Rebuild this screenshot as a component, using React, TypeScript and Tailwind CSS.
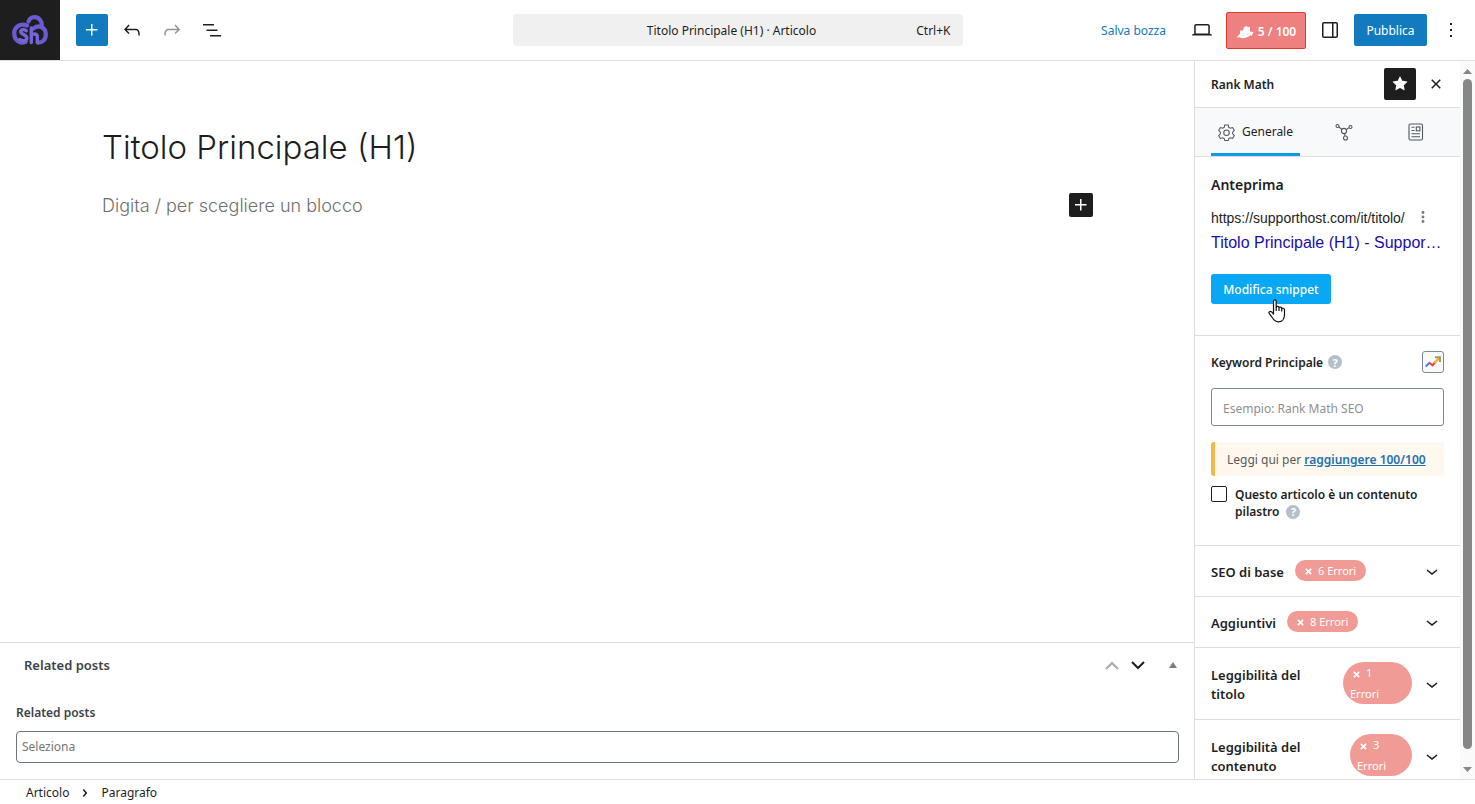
import React from "react";

const PATHS = {
  plus: "M11 12.5V17.5H12.5V12.5H17.5V11H12.5V6H11V11H6V12.5H11Z",
  undo: "M18.3 11.7c-.6-.6-1.4-.9-2.3-.9H6.7l2.9-3.3-1.1-1-4.5 5L8.5 16l1-1-2.7-2.7H16c.5 0 .9.2 1.3.5 1 1 1 3.4 1 4.5v.3h1.5v-.2c0-1.5 0-4.3-1.5-5.7z",
  redo: "M15.6 6.5l-1.1 1 2.9 3.3H8c-.9 0-1.7.3-2.3.9-1.4 1.5-1.4 4.2-1.4 5.6v.2h1.5v-.3c0-1.1 0-3.5 1-4.5.3-.3.7-.5 1.3-.5h9.2L14.5 15l1.1 1.1 4.6-4.6-4.6-5z",
  list: "M3 6h11v1.5H3V6Zm3.5 5.5h11V13h-11v-1.5ZM21 17H10v1.5h11V17Z",
  desktop: "M20.5 16h-.7V8c0-1.1-.9-2-2-2H6.2c-1.1 0-2 .9-2 2v8h-.7c-.8 0-1.5.7-1.5 1.5h20c0-.8-.7-1.5-1.5-1.5zM5.7 8c0-.3.2-.5.5-.5h11.6c.3 0 .5.2.5.5v7.6H5.7V8z",
  drawer: "M18 4H6c-1.1 0-2 .9-2 2v12c0 1.1.9 2 2 2h12c1.1 0 2-.9 2-2V6c0-1.1-.9-2-2-2zm-4 14.5H6c-.3 0-.5-.2-.5-.5V6c0-.3.2-.5.5-.5h8v13zm4.5-.5c0 .3-.2.5-.5.5h-2.5v-13H18c.3 0 .5.2.5.5v12z",
  more: "M13 19h-2v-2h2v2zm0-6h-2v-2h2v2zm0-6h-2V5h2v2z",
  down: "M17.5 11.6L12 16l-5.5-4.4.9-1.2L12 14l4.5-3.6 1 1.2z",
  star: "M11.776 4.454a.25.25 0 01.448 0l2.069 4.192a.25.25 0 00.188.137l4.626.672a.25.25 0 01.139.426l-3.348 3.263a.25.25 0 00-.072.222l.79 4.607a.25.25 0 01-.362.263l-4.138-2.175a.25.25 0 00-.232 0l-4.138 2.175a.25.25 0 01-.363-.263l.79-4.607a.25.25 0 00-.071-.222L4.754 9.881a.25.25 0 01.139-.426l4.626-.672a.25.25 0 00.188-.137l2.069-4.192z",
  close: "M12 13.06l3.712 3.713 1.061-1.06L13.061 12l3.712-3.712-1.06-1.06L12 10.938 8.288 7.227l-1.061 1.06L10.939 12l-3.712 3.712 1.06 1.061L12 13.061z",
  right: "M10.86 8.04L14.28 12.03L10.86 16.02L9.72 15.04L12.3 12.03L9.72 9.02L10.86 8.04Z",
};

function Icon({ name, className = "size-6" }: { name: keyof typeof PATHS; className?: string }) {
  return (
    <svg viewBox="0 0 24 24" fill="currentColor" className={`shrink-0 ${className}`} aria-hidden="true">
      <path d={PATHS[name]} />
    </svg>
  );
}

function Logo() {
  return (
    <svg viewBox="0 0 36 30" className="h-[30px] w-9" fill="none" strokeLinecap="round" aria-hidden="true">
      <g stroke="#6a5cd0" strokeWidth="4.2">
        <path d="M13.500 26.800C8 29.500 2.200 25 2.200 18.500C2.200 12 8 8 15 10.500" />
        <path d="M16.500 6.500C18 1.500 24.500 .8 28 4.800C29.200 6.300 29.800 8 29.800 10" />
        <path d="M21.500 13.500C26 9 33.800 12 33.800 19.500C33.800 25 30 27.800 25.800 27.600" />
      </g>
      <g stroke="#7466d8" strokeWidth="3.400">
        <path d="M14.300 15.800C11.500 13.400 8.200 15 9 17.500C10 20 14.800 19.500 14.800 23C14.800 26.300 9.800 26.300 7.800 24.500" />
        <path d="M19.300 13V27.500M19.300 21C21 18 25.300 18.300 25.300 22V27.500" />
      </g>
    </svg>
  );
}

function RankIcon() {
  return (
    <svg viewBox="0 0 18 16" className="h-4 w-[18px]" fill="#fff" aria-hidden="true">
      <path d="M4 6.500h3.500V11L4 12.300zM7.500 3.500l3-1.500h.5v8.500l-3.500 1.500zM11 3h3v5.500l-3 1.800z" />
      <path d="M.5 13.500l3.200-3.600 1.500 1.500c3.200.2 6.500-1 8.700-3l-.9-1.200 4.600 1-2 4-.9-1.200c-2.900 2.500-6.200 3.400-9.700 3.100l-1.300-.8z" />
    </svg>
  );
}

function Help() {
  return (
    <span className="inline-flex size-[14px] shrink-0 items-center justify-center rounded-full bg-[#b5bfc9] text-[11px] leading-none font-bold text-white">
      ?
    </span>
  );
}

function Badge({ count, stacked }: { count: number; stacked?: string }) {
  return (
    <span
      className={`rounded-[21px] bg-[#f09b96] text-[11px] text-white ${
        stacked ? `${stacked} pl-[7px] leading-[21px]` : "mb-[2px] px-[10px] leading-[21px] whitespace-nowrap"
      }`}
    >
      <svg viewBox="0 0 8 8" className={`mr-[6px] inline size-[7px] ${stacked ? "ml-[3px]" : ""}`} stroke="#fff" strokeWidth="2" aria-hidden="true">
        <path d="M1 1l6 6M7 1l-6 6" />
      </svg>
      {count} {stacked && <br />}Errori
    </span>
  );
}

const panels = [
  { title: "SEO di base", count: 6 },
  { title: "Aggiuntivi", count: 8 },
  { title: "Leggibilità del titolo", count: 1, stacked: "w-[69px]" },
  { title: "Leggibilità del contenuto", count: 3, stacked: "w-[62px]" },
];

function Header() {
  return (
    <header className="flex h-[61px] shrink-0 items-center border-b border-[#ddd]">
      <div className="flex flex-1 items-center gap-2">
        <a href="#" aria-label="SupportHost" className="mr-2 flex h-[60px] w-[60px] items-center justify-center bg-[#1e1e1e]">
          <Logo />
        </a>
        <button aria-label="Inserisci blocco" className="flex size-8 items-center justify-center rounded-xs bg-[#127bbf] text-white">
          <Icon name="plus" />
        </button>
        <button aria-label="Annulla" className="flex size-8 items-center justify-center"><Icon name="undo" /></button>
        <button aria-label="Ripeti" className="flex size-8 items-center justify-center text-[#949494]"><Icon name="redo" /></button>
        <button aria-label="Panoramica" className="flex size-8 items-center justify-center"><Icon name="list" /></button>
      </div>
      <button className="grid h-8 w-[450px] grid-cols-[1fr_auto_1fr] items-center rounded-sm bg-[#f0f0f0] px-3 pt-[2px]">
        <span className="col-start-2 pr-3">Titolo Principale (H1) · Articolo</span>
        <span className="text-right">Ctrl+K</span>
      </button>
      <div className="flex flex-1 items-center justify-end">
        <button className="mr-6 pt-[2px] text-[#127bbf]">Salva bozza</button>
        <button aria-label="Anteprima" className="mr-3"><Icon name="desktop" /></button>
        <button className="flex h-[37px] w-20 items-center justify-center gap-1 rounded-xs border border-[#e2392f] bg-[#ee807f] pt-[3px] font-semibold text-white">
          <RankIcon />
          <span>5 / 100</span>
        </button>
        <button aria-label="Impostazioni" className="mx-3"><Icon name="drawer" /></button>
        <button className="h-8 w-[73px] rounded-xs bg-[#127bbf] pt-[2px] text-white">Pubblica</button>
        <button aria-label="Opzioni" className="mx-3"><Icon name="more" /></button>
      </div>
    </header>
  );
}

function Editor() {
  return (
    <main className="flex min-w-0 flex-1 flex-col">
      <div className="flex-1 pt-[63px] pr-[101px] pl-[102px]">
        <h1 className="font-['Inter',sans-serif] text-[33px] leading-[46px] font-light text-[#1e1e1e]">Titolo Principale (H1)</h1>
        <div className="mt-[22px] flex items-center justify-between">
          <p className="pt-[2px] font-['Inter',sans-serif] text-[18px] leading-6 font-light text-[#6f6f6f]">Digita / per scegliere un blocco</p>
          <button aria-label="Aggiungi blocco" className="flex size-6 items-center justify-center rounded-xs bg-[#1e1e1e] text-white">
            <Icon name="plus" />
          </button>
        </div>
      </div>
      <section className="h-[137px] border-t border-[#ddd] pr-[15px] pl-4 text-[#3c434a]">
        <div className="flex h-11 items-center pl-2">
          <h2 className="flex-1 text-[13px] font-semibold">Related posts</h2>
          <button aria-label="Sposta su" className="mr-3 text-[#a7aaad]">
            <svg viewBox="0 0 14 9" className="h-[9px] w-[14px]" fill="none" stroke="currentColor" strokeWidth="2"><path d="M1 8l6-6 6 6" /></svg>
          </button>
          <button aria-label="Sposta giù" className="mr-6 text-[#1e1e1e]">
            <svg viewBox="0 0 14 9" className="h-[9px] w-[14px]" fill="none" stroke="currentColor" strokeWidth="2"><path d="M1 1l6 6 6-6" /></svg>
          </button>
          <button aria-label="Comprimi" className="mr-[2px] text-[#787c82]">
            <svg viewBox="0 0 8 6" className="h-[6px] w-2" fill="currentColor"><path d="M4 0l4 6H0z" /></svg>
          </button>
        </div>
        <label htmlFor="related" className="mt-[17px] block text-[12px] leading-[18px] font-semibold">Related posts</label>
        <input id="related" placeholder="Seleziona" className="mt-[9px] block h-8 w-full rounded-sm border border-[#6b7480] px-[5px] pb-[2px] placeholder:text-[#757575]" />
      </section>
    </main>
  );
}

function Sidebar() {
  return (
    <aside className="flex w-[281px] shrink-0 border-l border-[#ddd]">
      <div className="min-w-0 flex-1 overflow-hidden">
        <div className="flex h-[47px] items-center border-b border-[#ddd] pr-3 pl-4">
          <h2 className="flex-1 pt-[2px] font-semibold">Rank Math</h2>
          <button aria-label="Fissa" className="flex size-8 items-center justify-center rounded-xs bg-[#1e1e1e] text-white"><Icon name="star" /></button>
          <button aria-label="Chiudi" className="ml-2"><Icon name="close" /></button>
        </div>
        <nav className="flex h-[49px] border-b border-[#ddd] bg-[#f8f9fb] pr-2 pl-4">
          <button className="flex w-[89px] items-center justify-center gap-[7px] border-b-3 border-[#0c9ce2] pt-[3px]">
            <svg viewBox="0 0 18 18" className="size-[17px]" fill="none" stroke="#50575e" strokeWidth="1.1" aria-hidden="true">
              <path d="M7.200 1h3.600l.6 2.500 1.600.9 2.500-.7 1.800 3.100-1.800 1.800v1.800l1.800 1.800-1.800 3.100-2.500-.7-1.600.9-.6 2.000H7.200l-.6-2-1.600-.9-2.500.7L.7 12.200l1.800-1.800V8.600L.7 6.800l1.800-3.100 2.500.7 1.600-.9z" />
              <circle cx="9" cy="9.300" r="2.900" />
            </svg>
            Generale
          </button>
          <button aria-label="Schema" className="flex flex-1 items-center justify-center pl-2">
            <svg viewBox="0 0 18 18" className="size-[18px]" fill="none" stroke="#50575e" strokeWidth="1.100" aria-hidden="true">
              <circle cx="9" cy="8" r="2.600" /><circle cx="2.500" cy="3" r="1.500" /><circle cx="15.500" cy="4" r="1.500" /><circle cx="10.500" cy="15" r="2" />
              <path d="M3.800 4l3.100 2.400M14 4.600l-2.700 2M9.500 10.600l.5 2.400" />
            </svg>
          </button>
          <button aria-label="Social" className="flex flex-1 items-center justify-center">
            <svg viewBox="0 0 16 18" className="h-[18px] w-4" fill="none" stroke="#50575e" strokeWidth="1.100" aria-hidden="true">
              <rect x="1" y="1" width="13.500" height="16" rx="1.500" />
              <rect x="8.300" y="4" width="3.600" height="3.800" />
              <path d="M3.500 4.300h3M3.500 7.500h3M3.500 10.700h8.500M3.500 13.800h8.500" />
            </svg>
          </button>
        </nav>

        <section className="relative h-[179px] border-b border-[#ddd] px-4 pt-[18px]">
          <h3 className="text-[14px] leading-5 font-semibold">Anteprima</h3>
          <div className="mt-3 flex items-center justify-between pr-[19px] font-['Liberation_Sans',sans-serif] text-[14px] leading-[22px]">
            <span>https://supporthost.com/it/titolo/</span>
            <svg viewBox="0 0 4 12" className="mb-[2px] h-3 w-1" fill="#777" aria-hidden="true"><circle cx="2" cy="1.500" r="1.400" /><circle cx="2" cy="6" r="1.400" /><circle cx="2" cy="10.500" r="1.400" /></svg>
          </div>
          <p className="mt-[2px] font-['Liberation_Sans',sans-serif] text-[16px] leading-6 whitespace-nowrap text-[#1a0dab]">Titolo Principale (H1) - Suppor…</p>
          <button className="mt-[19px] h-[30px] w-[120px] rounded-[3px] bg-[#09a8f4] pt-[2px] font-medium text-white">Modifica snippet</button>
          <svg viewBox="0 0 18 24" className="absolute top-[142px] left-[73px] h-6 w-[18px]" fill="#fff" stroke="#111" strokeWidth="1.200" strokeLinejoin="round" aria-hidden="true">
            <path d="M5.500 15V2.300C5.500.5 8.200.5 8.200 2.300V8.300C8.400 6.900 11 7 11 8.700C11.300 7.700 13.700 7.900 13.700 9.600C14.100 8.900 16.500 9 16.500 10.900V15.500C16.500 20 14 22.800 10.500 22.800C7.500 22.800 6 21.500 4.600 19L1.200 14.400C.3 13 2.200 11.600 3.600 12.900z" />
            <path d="M8.200 8.300V12M11 8.700V12M13.700 9.600V12.500" fill="none" />
          </svg>
        </section>

        <section className="h-[210px] border-b border-[#ddd] px-4 pt-[15px]">
          <div className="flex items-center">
            <label htmlFor="keyword" className="pt-[2px] font-semibold">Keyword Principale</label>
            <span className="ml-[5px] flex flex-1"><Help /></span>
            <button aria-label="Tendenze" className="flex size-[22px] items-center justify-center rounded-[3px] border border-[#7e8993] bg-[#f8f9fa]">
              <svg viewBox="0 0 16 12" className="h-3 w-4" fill="none" strokeWidth="2" aria-hidden="true">
                <path d="M.7 10.500L4.500 6.800" stroke="#4285f4" />
                <path d="M4 6.500L7.500 9.300L10.300 6" stroke="#ea4335" />
                <path d="M9.500 6.800L14 2.200" stroke="#fbaf2c" strokeWidth="2.400" />
                <path d="M10 1.300H15V6" stroke="#a39a5c" />
              </svg>
            </button>
          </div>
          <input id="keyword" placeholder="Esempio: Rank Math SEO" className="mt-[15px] block h-[38px] w-full rounded-[3px] border border-[#7e8993] px-[11px] pt-[2px] placeholder:text-[#8f8f8f]" />
          <p className="mt-4 h-[34px] rounded-[3px] border-l-4 border-[#f0b849] bg-[#fef8ee] pt-px pl-3 leading-[34px] whitespace-nowrap text-[#5a5a5a]">
            Leggi qui per <a href="#" className="font-semibold text-[#2271b1] underline">raggiungere 100/100</a>
          </p>
          <div className="mt-[10px] flex gap-2 font-semibold">
            <input id="pillar" type="checkbox" className="size-4 shrink-0 appearance-none rounded-xs border border-[#1e1e1e]" />
            <label htmlFor="pillar" className="leading-[17px]">
              Questo articolo è un contenuto <span className="inline-flex items-center gap-[7px]">pilastro <Help /></span>
            </label>
          </div>
        </section>

        {panels.map((p) => (
          <button
            key={p.title}
            className={`flex w-full items-center border-b border-[#ddd] pr-4 pl-4 text-left font-semibold ${p.stacked ? "h-[72px]" : "h-[51px]"}`}
          >
            <span className={`pt-[2px] text-[13px] leading-[19px] ${p.stacked ? "w-28" : "mr-[11px]"}`}>{p.title}</span>
            <span className={`flex font-normal ${p.stacked ? "mb-px flex-1 justify-end" : "flex-1"}`}>
              <Badge count={p.count} stacked={p.stacked} />
            </span>
            <Icon name="down" className="ml-2 size-6" />
          </button>
        ))}
      </div>
      <div className="flex w-[15px] flex-col items-center bg-[#fafafa] pt-2 pb-[7px]" aria-hidden="true">
        <svg viewBox="0 0 9 5" className="h-[5px] w-[9px]" fill="#868686"><path d="M4.500 0L9 5H0z" /></svg>
        <div className="mt-[5px] mb-[18px] w-[9px] flex-1 rounded-full bg-[#868888]" />
        <svg viewBox="0 0 9 5" className="h-[5px] w-[9px]" fill="#868686"><path d="M4.500 5L9 0H0z" /></svg>
      </div>
    </aside>
  );
}

export default function App() {
  return (
    <div className="flex h-screen flex-col overflow-hidden bg-white font-['Noto_Sans','Open_Sans',sans-serif] text-[12px] leading-[18px] text-[#1e1e1e]">
      <Header />
      <div className="flex min-h-0 flex-1">
        <Editor />
        <Sidebar />
      </div>
      <footer className="flex h-[25px] shrink-0 items-center border-t border-[#ddd] pt-px pl-[26px]">
        <a href="#">Articolo</a>
        <Icon name="right" className="mx-1 size-6" />
        <a href="#">Paragrafo</a>
      </footer>
    </div>
  );
}
